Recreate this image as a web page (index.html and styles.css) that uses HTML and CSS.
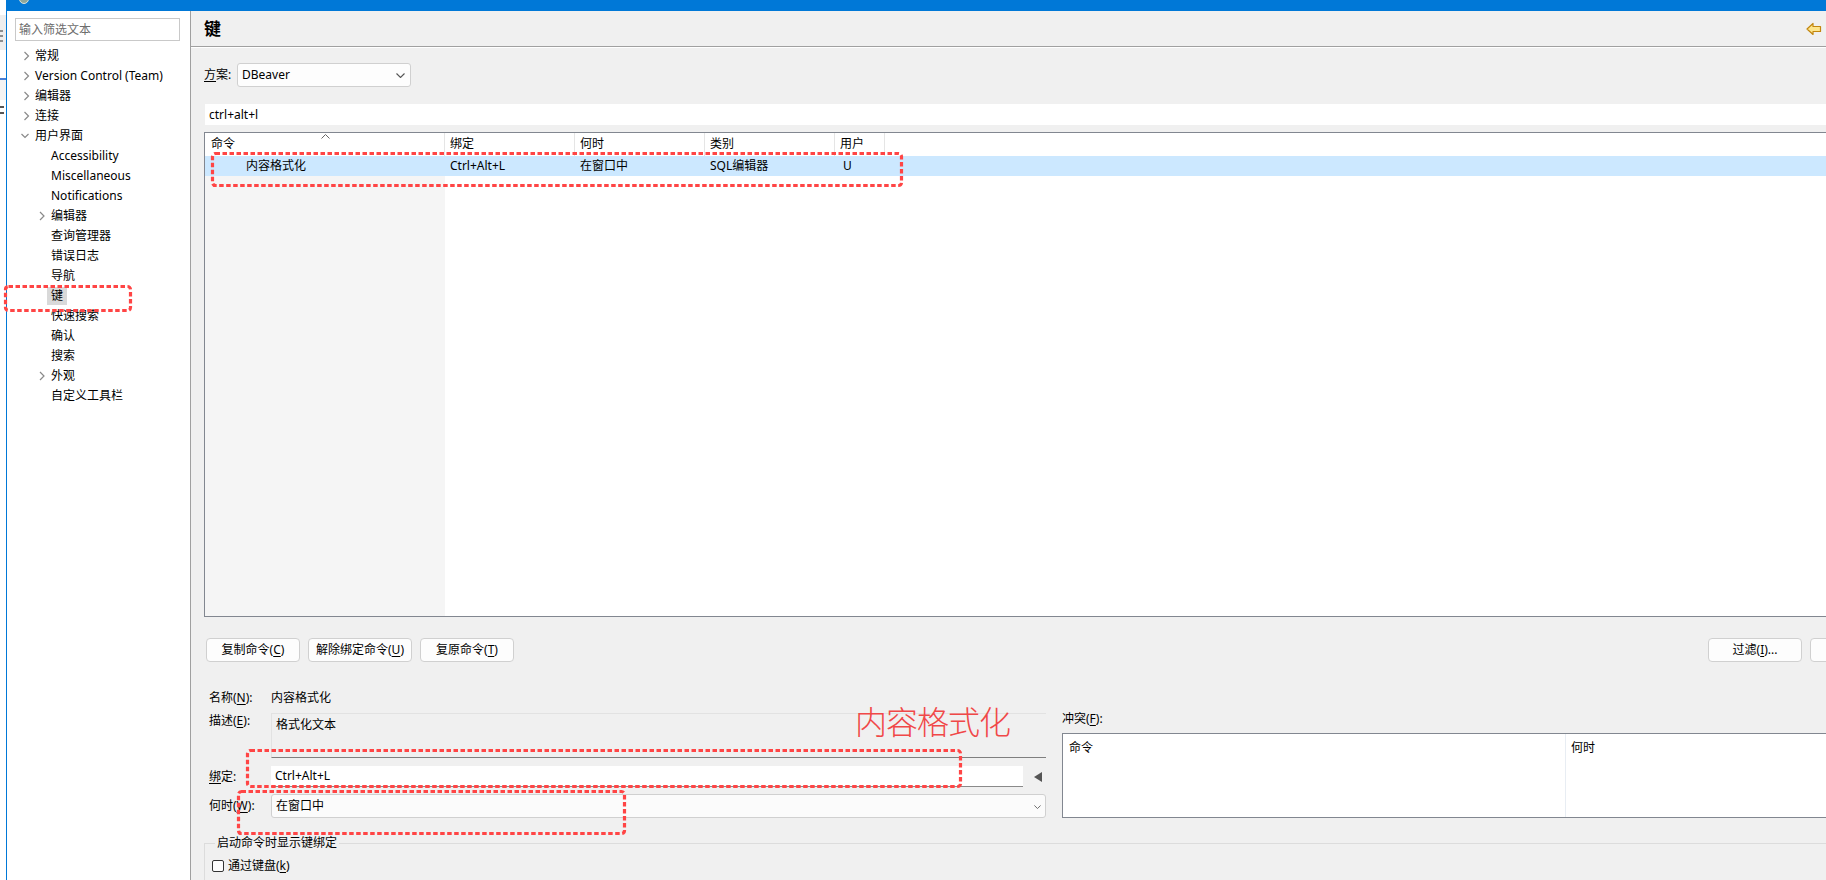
FILE: index.html
```html
<!DOCTYPE html>
<html lang="zh-CN">
<head>
    <meta charset="UTF-8">
    <title>首选项 - 键</title>
    <link rel="stylesheet" href="styles.css">
</head>
<body>

<div class="screen">
    <!-- sliver of the window behind -->
    <div class="behind">
        <div class="bh-white"></div>
        <div class="bh-gray"><i></i><i></i><i></i></div>
        <div class="bh-white2"></div>
        <div class="bh-blue"></div>
        <div class="bh-gray2"></div>
        <div class="bh-glyph"><i></i><i></i></div>
    </div>

    <div class="window">
        <div class="titlebar"><span class="app-icon"></span></div>

        <div class="main">
            <!-- left: preference tree -->
            <aside class="sidebar">
                <div class="tree-filter">输入筛选文本</div>
                <ul class="tree">
                    <li class="node"><svg class="tw" viewBox="0 0 14 20"><path d="M3.5 6l4 4-4 4"/></svg>常规</li>
                    <li class="node"><svg class="tw" viewBox="0 0 14 20"><path d="M3.5 6l4 4-4 4"/></svg>Version Control (Team)</li>
                    <li class="node"><svg class="tw" viewBox="0 0 14 20"><path d="M3.5 6l4 4-4 4"/></svg>编辑器</li>
                    <li class="node"><svg class="tw" viewBox="0 0 14 20"><path d="M3.5 6l4 4-4 4"/></svg>连接</li>
                    <li class="node"><svg class="tw" viewBox="0 0 14 20"><path d="M0.5 8l3.5 3.5L7.5 8"/></svg>用户界面</li>
                    <li class="node sub"><span class="tw"></span>Accessibility</li>
                    <li class="node sub"><span class="tw"></span>Miscellaneous</li>
                    <li class="node sub"><span class="tw"></span>Notifications</li>
                    <li class="node sub"><svg class="tw" viewBox="0 0 14 20"><path d="M3 6l4 4-4 4"/></svg>编辑器</li>
                    <li class="node sub"><span class="tw"></span>查询管理器</li>
                    <li class="node sub"><span class="tw"></span>错误日志</li>
                    <li class="node sub"><span class="tw"></span>导航</li>
                    <li class="node sub"><span class="tw"></span><span class="sel">键</span></li>
                    <li class="node sub"><span class="tw"></span>快速搜索</li>
                    <li class="node sub"><span class="tw"></span>确认</li>
                    <li class="node sub"><span class="tw"></span>搜索</li>
                    <li class="node sub"><svg class="tw" viewBox="0 0 14 20"><path d="M3 6l4 4-4 4"/></svg>外观</li>
                    <li class="node sub"><span class="tw"></span>自定义工具栏</li>
                </ul>
            </aside>

            <!-- right: keys page -->
            <section class="content">
                <header class="page-head">
                    <h1>键</h1>
                    <svg class="back-icon" width="16" height="14" viewBox="0 0 16 14">
                        <path d="M1 7L7 1.5V4.5H14.5V9.5H7V12.5Z" fill="#fde58c" stroke="#c2860f" stroke-width="1.2" stroke-linejoin="round"/>
                    </svg>
                </header>

                <div class="page">
                    <div class="scheme-row">
                        <span class="lbl"><u>方</u>案:</span>
                        <div class="combo scheme">DBeaver
                            <svg class="chev" viewBox="0 0 9 5"><path d="M0.5 0.5l4 4 4-4"/></svg>
                        </div>
                    </div>

                    <div class="search">ctrl+alt+l</div>

                    <div class="grid">
                        <div class="grid-head">
                            <div class="cell c1">命令<svg class="sort" viewBox="0 0 9 5"><path d="M0.5 4.5l4-4 4 4"/></svg></div>
                            <div class="cell c2">绑定</div>
                            <div class="cell c3">何时</div>
                            <div class="cell c4">类别</div>
                            <div class="cell c5">用户</div>
                        </div>
                        <div class="grid-body">
                            <div class="grid-row selected">
                                <div class="cell c1 cmd">内容格式化</div>
                                <div class="cell c2">Ctrl+Alt+L</div>
                                <div class="cell c3">在窗口中</div>
                                <div class="cell c4">SQL编辑器</div>
                                <div class="cell c5">U</div>
                            </div>
                        </div>
                    </div>

                    <div class="actions">
                        <button class="btn w94">复制命令(<u>C</u>)</button>
                        <button class="btn w104">解除绑定命令(<u>U</u>)</button>
                        <button class="btn w94">复原命令(<u>T</u>)</button>
                        <span class="spacer"></span>
                        <button class="btn w94">过滤(<u>I</u>)...</button>
                        <button class="btn w94" aria-label="导出"></button>
                    </div>

                    <div class="details">
                        <div class="detail-left">
                            <div class="frow name-row">
                                <span class="flabel">名称(<u>N</u>):</span>
                                <span class="fvalue">内容格式化</span>
                            </div>
                            <div class="frow desc-row">
                                <span class="flabel">描述(<u>E</u>):</span>
                                <div class="desc-box">格式化文本</div>
                            </div>
                            <div class="frow bind-row">
                                <span class="flabel"><u>绑</u>定:</span>
                                <div class="bind-input">Ctrl+Alt+L</div>
                                <svg class="bind-menu" viewBox="0 0 8 10"><path d="M8 0V10L0 5Z"/></svg>
                            </div>
                            <div class="frow when-row">
                                <span class="flabel">何时(<u>W</u>):</span>
                                <div class="combo when">在窗口中
                                    <svg class="chev small" viewBox="0 0 9 5"><path d="M0.5 0.5l4 4 4-4"/></svg>
                                </div>
                            </div>
                        </div>

                        <div class="detail-right">
                            <div class="conflict-lbl">冲突(<u>F</u>):</div>
                            <div class="conflicts">
                                <div class="cf-col cf1">命令</div>
                                <div class="cf-col cf2">何时</div>
                            </div>
                        </div>
                    </div>

                    <fieldset class="group">
                        <legend>启动命令时显示键绑定</legend>
                        <label class="check"><span class="box"></span><span>通过键盘(<u>k</u>)</span></label>
                    </fieldset>
                </div>
            </section>
        </div>
    </div>
</div>

<!-- hand-drawn annotations on the screenshot -->
<div class="mark mark-nav"><svg><rect/></svg></div>
<div class="mark mark-row"><svg><rect/></svg></div>
<div class="mark mark-bind"><svg><rect/></svg></div>
<div class="mark mark-when"><svg><rect/></svg></div>
<div class="mark-text">内容格式化</div>

</body>
</html>
```

FILE: styles.css
```css
* { margin: 0; padding: 0; box-sizing: border-box; }

body {
    width: 1826px;
    height: 880px;
    overflow: hidden;
    position: relative;
    background: #fff;
    color: #000;
    font-family: "Noto Sans", "Noto Sans CJK SC", sans-serif;
    font-size: 12px;
    line-height: 16px;
}

u { text-decoration: underline; text-underline-offset: 2px; }

.screen { display: flex; height: 880px; }

/* window behind, only a few pixels show */
.behind { width: 6px; display: flex; flex-direction: column; background: #fff; overflow: hidden; }
.bh-white { height: 15px; }
.bh-gray { height: 35px; background: #eeeeee; padding: 15px 0 0 0; }
.bh-gray i { display: block; width: 3px; height: 2px; background: #8d8d8d; margin-bottom: 3px; }
.bh-white2 { height: 10px; }
.bh-blue { height: 20px; border-bottom: 2px solid #4a7fd6; }
.bh-gray2 { height: 20px; background: #f3f3f3; }
.bh-glyph { height: 24px; padding-top: 6px; }
.bh-glyph i { display: block; width: 4px; height: 2px; background: #555; margin-bottom: 4px; }

.window {
    flex: 1;
    min-width: 0;
    display: flex;
    flex-direction: column;
    border-left: 1px solid #0078d7;
}

.titlebar { height: 11px; flex-shrink: 0; background: #0078d7; position: relative; overflow: hidden; }
.app-icon {
    position: absolute;
    left: 12px;
    top: -6px;
    width: 10px;
    height: 10px;
    border-radius: 50%;
    background: #8fa79a;
    border: 1px solid #d6e2dc;
}

.main { flex: 1; min-height: 0; display: flex; }

/* ---------- sidebar ---------- */
.sidebar {
    width: 184px;
    flex-shrink: 0;
    background: #fff;
    border-right: 1px solid #a0a0a0;
    padding-top: 7px;
}

.tree-filter {
    margin-left: 8px;
    width: 165px;
    height: 23px;
    border: 1px solid #c9c9c9;
    padding: 0 3px;
    line-height: 21px;
    color: #6d6d6d;
}

.tree { list-style: none; margin-top: 5px; }
.node {
    height: 20px;
    display: flex;
    align-items: center;
    padding-left: 14px;
    white-space: nowrap;
}
.node.sub { padding-left: 30px; }
.tw { width: 14px; height: 20px; flex-shrink: 0; display: block; }
svg.tw path { fill: none; stroke: #8a8a8a; stroke-width: 1.2; }
.sel { background: #d9d9d9; padding: 1px 4px; margin-left: -4px; }

/* ---------- content ---------- */
.content { flex: 1; min-width: 0; background: #f0f0f0; overflow: hidden; }

.page-head {
    height: 36px;
    display: flex;
    align-items: center;
    justify-content: space-between;
    padding: 0 4px 0 13px;
    border-bottom: 1px solid #a0a0a0;
    box-shadow: 0 1px 0 #fff;
}
.page-head h1 { font-size: 17px; font-weight: bold; line-height: 20px; margin-top: 1px; }
.back-icon { display: block; margin-top: 1px; }

.page { padding: 16px 0 0 13px; margin-right: -78px; }

.scheme-row { display: flex; align-items: center; height: 24px; }
.lbl { width: 33px; }

.combo {
    position: relative;
    height: 24px;
    background: #fdfdfd;
    border: 1px solid #d0d0d0;
    border-radius: 3px;
    padding: 0 4px;
    line-height: 22px;
}
.combo.scheme { width: 174px; }
.chev { position: absolute; width: 9px; height: 5px; top: 9px; right: 5px; }
.chev path { fill: none; stroke: #555; stroke-width: 1.1; }
.chev.small { width: 7px; height: 4px; top: 10px; right: 4px; }

.search {
    margin-top: 17px;
    margin-left: 1px;
    height: 21px;
    background: #fff;
    padding-left: 4px;
    line-height: 21px;
}

/* ---------- command table ---------- */
.grid {
    margin-top: 7px;
    height: 485px;
    border: 1px solid #828790;
    background: linear-gradient(to right, #f5f5f5 240px, #fff 240px);
}
.grid-head { display: flex; height: 23px; background: #fff; }
.grid-head .cell { border-right: 1px solid #e5e5e5; padding: 3px 0 0 6px; position: relative; }
.grid-head .cell.c2, .grid-head .cell.c3, .grid-head .cell.c4, .grid-head .cell.c5 { padding-left: 5px; }
.cell { flex-shrink: 0; white-space: nowrap; }
.c1 { width: 240px; }
.c2 { width: 130px; }
.c3 { width: 130px; }
.c4 { width: 130px; }
.c5 { width: 50px; }

.sort { position: absolute; left: 116px; top: 1px; width: 9px; height: 5px; }
.sort path { fill: none; stroke: #666; stroke-width: 1; }

.grid-row { display: flex; height: 20px; align-items: center; }
.grid-row .cell { padding-left: 5px; }
.grid-row .cell.cmd { padding-left: 41px; }
.grid-row .cell.c5 { padding-left: 8px; }
.grid-row.selected { background: #cce8ff; }

/* ---------- buttons ---------- */
.actions { display: flex; gap: 8px; margin-top: 21px; margin-left: 2px; }
.spacer { flex: 1; }
.btn {
    height: 24px;
    background: #fdfdfd;
    border: 1px solid #d0d0d0;
    border-radius: 4px;
    font: inherit;
    color: #000;
    white-space: nowrap;
}
.w94 { width: 94px; }
.w104 { width: 104px; }

/* ---------- details ---------- */
.details { display: flex; margin-top: 26px; }
.detail-left { width: 842px; flex-shrink: 0; }
.frow { display: flex; }
.flabel { width: 67px; flex-shrink: 0; padding-left: 5px; white-space: nowrap; }
.name-row { height: 20px; align-items: center; }
.desc-row { margin-top: 5px; }
.desc-box {
    flex: 1;
    height: 45px;
    background: #f0f0f0;
    border-top: 1px solid #e2e2e2;
    border-left: 1px solid #e2e2e2;
    border-bottom: 1px solid #7f7f7f;
    padding: 3px 4px;
}
.bind-row { margin-top: 8px; height: 21px; align-items: center; }
.bind-input {
    width: 752px;
    height: 21px;
    background: #fff;
    border-bottom: 1px solid #8a8a8a;
    padding-left: 4px;
    line-height: 20px;
}
.bind-menu { width: 8px; height: 10px; margin-left: 11px; }
.bind-menu path { fill: #555; }
.when-row { margin-top: 7px; align-items: center; }
.combo.when { width: 775px; background: #fbfbfb; }

.detail-right { flex: 1; margin-left: 16px; padding-top: 23px; }
.conflict-lbl { height: 16px; }
.conflicts {
    margin-top: 6px;
    height: 85px;
    background: #fff;
    border: 1px solid #828790;
    display: flex;
}
.cf-col { padding: 6px 0 0 6px; }
.cf1 { width: 503px; border-right: 1px solid #e8edf3; }
.cf2 { padding-left: 5px; }

.group {
    margin-top: 17px;
    border: 1px solid #dcdcdc;
    border-right: none;
    border-bottom: none;
    padding: 7px 0 20px 7px;
    height: 60px;
}
.group legend { margin-left: 3px; padding: 0 2px; }
.check { display: flex; align-items: center; gap: 4px; }
.box {
    width: 12px;
    height: 12px;
    border: 1px solid #333;
    border-radius: 2px;
    background: #fdfdfd;
}

/* ---------- red annotations ---------- */
.mark { position: absolute; }
.mark svg { width: 100%; height: 100%; display: block; overflow: visible; }
.mark rect {
    x: 1.5px;
    y: 1.5px;
    width: calc(100% - 3px);
    height: calc(100% - 3px);
    rx: 3px;
    fill: none;
    stroke: #ff4545;
    stroke-width: 3.2;
    stroke-dasharray: 4.5 2.5;
}
.mark-nav { left: 4px; top: 285px; width: 128px; height: 27px; }
.mark-row { left: 211px; top: 152px; width: 692px; height: 35px; }
.mark-bind { left: 246px; top: 749px; width: 716px; height: 39px; }
.mark-when { left: 237px; top: 790px; width: 389px; height: 45px; }
.mark-text {
    position: absolute;
    left: 855px;
    top: 700px;
    font-family: "Noto Sans CJK SC", sans-serif;
    font-size: 32px;
    font-weight: 300;
    line-height: 40px;
    color: #f04848;
    letter-spacing: -1px;
}
```
